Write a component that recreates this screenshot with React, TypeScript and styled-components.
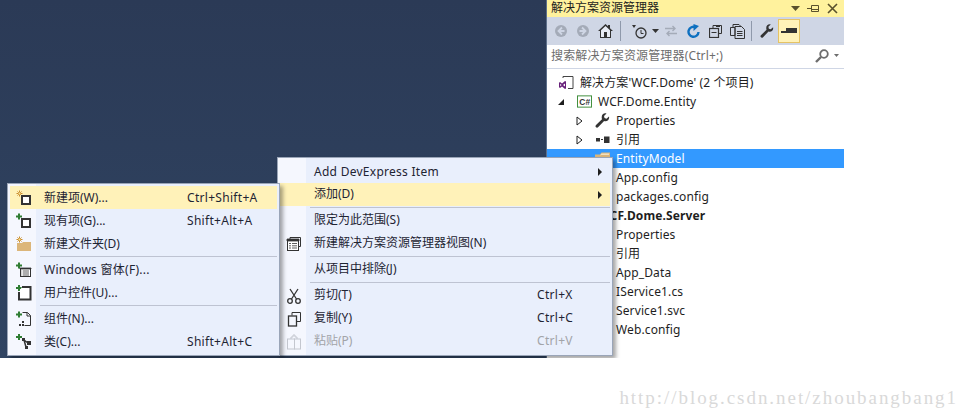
import React from "react";
import styled, { createGlobalStyle } from "styled-components";

// ---------------------------------------------------------------------------
// Types
// ---------------------------------------------------------------------------

type IconName =
  | "newItem" | "existingItem" | "newFolder" | "winForm" | "userControl"
  | "component" | "classItem" | "newView" | "cut" | "copy" | "paste";

type MenuEntry =
  | { sep: true }
  | {
      sep?: false;
      label: string;
      shortcut?: string;
      icon?: IconName;
      hot?: boolean;
      disabled?: boolean;
      arrow?: boolean;
    };

interface TreeEntry {
  depth: number;
  label: string;
  twist?: "open" | "closed";
  icon?: "solution" | "csharp" | "wrench" | "refs" | "folder";
  selected?: boolean;
  bold?: boolean;
}

// ---------------------------------------------------------------------------
// Data
// ---------------------------------------------------------------------------

const ADD_MENU: MenuEntry[] = [
  { label: "新建项(W)...", shortcut: "Ctrl+Shift+A", icon: "newItem", hot: true },
  { label: "现有项(G)...", shortcut: "Shift+Alt+A", icon: "existingItem" },
  { label: "新建文件夹(D)", icon: "newFolder" },
  { sep: true },
  { label: "Windows 窗体(F)...", icon: "winForm" },
  { label: "用户控件(U)...", icon: "userControl" },
  { sep: true },
  { label: "组件(N)...", icon: "component" },
  { label: "类(C)...", shortcut: "Shift+Alt+C", icon: "classItem" },
];

const PROJECT_MENU: MenuEntry[] = [
  { label: "Add DevExpress Item", arrow: true },
  { label: "添加(D)", arrow: true, hot: true },
  { sep: true },
  { label: "限定为此范围(S)" },
  { label: "新建解决方案资源管理器视图(N)", icon: "newView" },
  { sep: true },
  { label: "从项目中排除(J)" },
  { sep: true },
  { label: "剪切(T)", shortcut: "Ctrl+X", icon: "cut" },
  { label: "复制(Y)", shortcut: "Ctrl+C", icon: "copy" },
  { label: "粘贴(P)", shortcut: "Ctrl+V", icon: "paste", disabled: true },
];

const TREE: TreeEntry[] = [
  { depth: 0, label: "解决方案'WCF.Dome' (2 个项目)", icon: "solution" },
  { depth: 1, label: "WCF.Dome.Entity", twist: "open", icon: "csharp" },
  { depth: 2, label: "Properties", twist: "closed", icon: "wrench" },
  { depth: 2, label: "引用", twist: "closed", icon: "refs" },
  { depth: 2, label: "EntityModel", icon: "folder", selected: true },
  { depth: 2, label: "App.config" },
  { depth: 2, label: "packages.config" },
  { depth: 1, label: "WCF.Dome.Server", bold: true },
  { depth: 2, label: "Properties" },
  { depth: 2, label: "引用" },
  { depth: 2, label: "App_Data" },
  { depth: 2, label: "IService1.cs" },
  { depth: 2, label: "Service1.svc" },
  { depth: 2, label: "Web.config" },
];

// ---------------------------------------------------------------------------
// Styled
// ---------------------------------------------------------------------------

const Global = createGlobalStyle`
  html, body {
    margin: 0;
    background: #fff;
    overflow: hidden;
  }
  body {
    font-family: "Noto Sans", "Noto Sans CJK SC", sans-serif;
    font-size: 12px;
    line-height: 16px;
    color: #1e1e1e;
  }
`;

const Stage = styled.div`
  position: relative;
  display: flex;
  width: 844px;
  height: 358px;
  overflow: hidden;
`;

const Workspace = styled.div`
  width: 546px;
  flex-shrink: 0;
  background: linear-gradient(#2b3a56, #304462);
`;

const Panel = styled.div`
  width: 297px;
  flex-shrink: 0;
  display: flex;
  flex-direction: column;
  background: #fff;
  border-left: 1px solid #5d6f8a;
  border-right: 1px solid #9aa6bb;
`;

const TitleBar = styled.div`
  display: flex;
  align-items: center;
  height: 17px;
  padding: 0 6px 0 4px;
  background: #fff29d;
  color: #1c1c1c;
`;

const TitleText = styled.span`
  flex: 1;
  line-height: 12px;
  margin-top: -2px;
`;

const TitleButtons = styled.div`
  display: flex;
  align-items: center;
  gap: 7px;
`;

const Toolbar = styled.div`
  display: flex;
  align-items: center;
  height: 28px;
  padding-left: 3px;
  background: #cfd6e5;
`;

const ToolButton = styled.div<{ $active?: boolean; $width?: number }>`
  box-sizing: border-box;
  width: ${(p) => p.$width ?? 22}px;
  height: 24px;
  display: flex;
  align-items: center;
  justify-content: center;
  background: ${(p) => (p.$active ? "#fff2b9" : "transparent")};
  border: 1px solid ${(p) => (p.$active ? "#e5c365" : "transparent")};
`;

const ToolSep = styled.div<{ $left: number; $right: number }>`
  width: 1px;
  height: 20px;
  margin: 0 ${(p) => p.$right}px 0 ${(p) => p.$left}px;
  background: #8f99ab;
`;

const SearchBox = styled.div`
  display: flex;
  align-items: center;
  box-sizing: border-box;
  height: 24px;
  padding: 0 5px 2px 4px;
  background: #fff;
  border-bottom: 1px solid #cfd6e5;
  color: #6d6d6d;
`;

const SearchHint = styled.span`
  flex: 1;
  letter-spacing: 0.15px;
`;

const SearchCaret = styled.svg`
  margin-left: 5px;
`;

const Tree = styled.div`
  padding-top: 4px;
`;

const TreeRow = styled.div<{ $selected?: boolean; $bold?: boolean }>`
  display: flex;
  align-items: center;
  height: 19px;
  overflow: hidden;
  white-space: nowrap;
  letter-spacing: 0.12px;
  background: ${(p) => (p.$selected ? "#3399ff" : "transparent")};
  color: ${(p) => (p.$selected ? "#fff" : "#1e1e1e")};
  font-weight: ${(p) => (p.$bold ? 700 : 400)};
`;

const Twist = styled.span<{ $depth: number }>`
  flex-shrink: 0;
  width: 12px;
  margin-left: ${(p) => 18 * p.$depth - 10}px;
  display: flex;
  align-items: center;
  justify-content: center;
`;

const TreeIcon = styled.span`
  flex-shrink: 0;
  width: 15px;
  height: 15px;
  margin: 0 6px 0 10px;
  display: flex;
  align-items: center;
  justify-content: center;
`;

const Menu = styled.div<{ $left: number; $top: number; $width: number; $z: number }>`
  position: absolute;
  left: ${(p) => p.$left}px;
  top: ${(p) => p.$top}px;
  z-index: ${(p) => p.$z};
  box-sizing: border-box;
  width: ${(p) => p.$width}px;
  padding: 2px;
  background: linear-gradient(to right, #f5f7fe 28px, #e9effc 28px);
  border: 1px solid #9aa5b8;
  box-shadow: 3px 3px 4px rgba(0, 0, 0, 0.35);
  color: #1e2433;
`;

const MenuRow = styled.div<{ $hot?: boolean; $disabled?: boolean }>`
  display: flex;
  align-items: center;
  height: 23px;
  white-space: nowrap;
  background: ${(p) => (p.$hot ? "#fff2b9" : "transparent")};
  color: ${(p) => (p.$disabled ? "#a2a4a8" : "inherit")};
`;

const MenuIcon = styled.span`
  flex-shrink: 0;
  width: 27px;
  margin-right: 7px;
  display: flex;
  align-items: center;
  justify-content: center;
`;

const MenuLabel = styled.span<{ $width: number; $latin: boolean; $nudge: number }>`
  flex-shrink: 0;
  width: ${(p) => p.$width}px;
  margin-top: ${(p) => (p.$latin ? 0 : p.$nudge)}px;
  letter-spacing: ${(p) => (p.$latin ? "0.27px" : "0")};
`;

const MenuShortcut = styled.span<{ $nudge: number }>`
  margin-top: ${(p) => p.$nudge}px;
  letter-spacing: 0.3px;
`;

const MenuArrow = styled.span`
  margin-left: auto;
  margin-right: 8px;
  width: 0;
  height: 0;
  border-left: 4px solid #1e1e1e;
  border-top: 4px solid transparent;
  border-bottom: 4px solid transparent;
`;

const MenuSep = styled.div`
  height: 1px;
  margin: 1px 0 1px 30px;
  background: #bec3d2;
`;

const Watermark = styled.div`
  height: 60px;
  width: 958px;
  box-sizing: border-box;
  padding-top: 28px;
  text-align: right;
  font-family: "Liberation Serif", serif;
  font-size: 19px;
  line-height: 24px;
  letter-spacing: 1.95px;
  color: #d9d9d9;
`;

// ---------------------------------------------------------------------------
// Icons
// ---------------------------------------------------------------------------

const Star = ({ x = 3, y = 3 }: { x?: number; y?: number }) => (
  <g stroke="#c98a2b" strokeWidth="1">
    <path d={`M${x} ${y - 3}v6M${x - 3} ${y}h6M${x - 2} ${y - 2}l4 4M${x + 2} ${y - 2}l-4 4`} />
    <rect x={x - 1} y={y - 1} width="2" height="2" fill="#f6e39a" stroke="none" />
  </g>
);

const Plus = ({ x = 3, y = 3 }: { x?: number; y?: number }) => (
  <path d={`M${x} ${y - 3}v6M${x - 3} ${y}h6`} stroke="#2f7d32" strokeWidth="2" />
);

const MenuGlyph = ({ name }: { name: IconName }) => {
  switch (name) {
    case "newItem":
      return (
        <svg width="16" height="16" viewBox="0 0 16 16">
          <Star x={3.5} y={3.5} />
          <rect x="6" y="6" width="8" height="8" fill="#fff" stroke="#333" strokeWidth="2" />
        </svg>
      );
    case "existingItem":
      return (
        <svg width="16" height="16" viewBox="0 0 16 16">
          <Plus x={3} y={3.5} />
          <rect x="6" y="6" width="8" height="8" fill="#fff" stroke="#333" strokeWidth="2" />
        </svg>
      );
    case "newFolder":
      return (
        <svg width="16" height="16" viewBox="0 0 16 16">
          <path d="M1 7h5l1-1h8v9H1z" fill="#dcb67a" />
          <Star x={3.5} y={3.5} />
        </svg>
      );
    case "winForm":
      return (
        <svg width="16" height="16" viewBox="0 0 16 16">
          <Plus x={3} y={3.5} />
          <rect x="4.500" y="6.500" width="10" height="8" fill="#fff" stroke="#333" />
          <path d="M4 6h11v1H4zM7 9h6M7 11h6M7 13h6M5.500 9h.8M5.500 11h.8M5.500 13h.8" fill="#333" stroke="#333" strokeWidth=".8" />
        </svg>
      );
    case "userControl":
      return (
        <svg width="16" height="16" viewBox="0 0 16 16">
          <Plus x={3} y={3} />
          <path d="M6 2h8.500v12.500H3V7" fill="#fff" stroke="#333" strokeWidth="2" />
        </svg>
      );
    case "component":
      return (
        <svg width="16" height="16" viewBox="0 0 16 16">
          <Plus x={3} y={3.500} />
          <path d="M6.500 1.500h5l3 3v10h-6" fill="none" stroke="#333" />
          <path d="M11 1.500v3.500h3.500" fill="none" stroke="#333" />
          <path d="M6 10h2v2H6zM3 13h2v2H3zM6 13h2v2H6z" fill="#333" />
        </svg>
      );
    case "classItem":
      return (
        <svg width="16" height="16" viewBox="0 0 16 16">
          <Plus x={3} y={3} />
          <path d="M6 4h3v3H6zM11 7h4v4h-4zM9 12h3v3H9z" fill="#333" />
          <path d="M8 6l4 3M8 6l2 7" stroke="#333" strokeWidth="1.500" />
        </svg>
      );
    case "newView":
      return (
        <svg width="16" height="16" viewBox="0 0 16 16">
          <path d="M4 3V1.500h10.500v9H13" fill="none" stroke="#333" />
          <rect x="1.500" y="3.500" width="11" height="11" fill="#fff" stroke="#333" />
          <path d="M1 3h12v2H1zM3 7.500h2M6 7.500h5M3 9.800h2M6 9.800h5M3 12h2M6 12h5" fill="#333" stroke="#333" strokeWidth=".8" />
        </svg>
      );
    case "cut":
      return (
        <svg width="16" height="16" viewBox="0 0 16 16" fill="none" stroke="#333">
          <path d="M4 1l6.500 10M12 1L5.500 11" strokeWidth="1.300" />
          <circle cx="4" cy="13" r="2.300" strokeWidth="1.300" />
          <circle cx="12" cy="13" r="2.300" strokeWidth="1.300" />
        </svg>
      );
    case "copy":
      return (
        <svg width="16" height="16" viewBox="0 0 16 16" fill="none" stroke="#333">
          <path d="M6 4.500V1.500h8.500v9H10.500" />
          <rect x="2.500" y="5" width="8" height="10" strokeWidth="1.300" />
        </svg>
      );
    case "paste":
      return (
        <svg width="16" height="16" viewBox="0 0 16 16" fill="none" stroke="#c4c7cf">
          <path d="M5 5V3h2V1h2v2h2v2" />
          <rect x="1.500" y="5" width="7" height="10" />
          <rect x="8.500" y="5" width="6" height="10" />
        </svg>
      );
  }
};

const RoundArrow = ({ flip }: { flip?: boolean }) => (
  <svg width="14" height="14" viewBox="0 0 14 14" style={flip ? { transform: "scaleX(-1)" } : undefined}>
    <circle cx="7" cy="7" r="6" fill="#a4abb8" />
    <path d="M8 3.500L4.500 7 8 10.500M5 7h5.500" fill="none" stroke="#cfd6e5" strokeWidth="1.800" />
  </svg>
);

const TreeGlyph = ({ name }: { name: NonNullable<TreeEntry["icon"]> }) => {
  switch (name) {
    case "solution":
      return (
        <svg width="15" height="15" viewBox="0 0 15 15">
          <path d="M4 3V1.500h10v12H9" fill="none" stroke="#444" />
          <path d="M1 7l2 1.500L6 6l1 .5v7L6 14l-3-2.500L1 13l-1-.7V7.700zM1.200 8.800v2.500L2.600 10zM6 8.500L4 10l2 1.500z" fill="#68217a" />
        </svg>
      );
    case "csharp":
      return (
        <svg width="16" height="15" viewBox="0 0 16 15">
          <rect x=".5" y="1.500" width="15" height="12" fill="#fff" stroke="#388a34" />
          <text x="2.500" y="11" fontSize="9" fontWeight="700" fill="#333" fontFamily="Liberation Sans, sans-serif">C#</text>
        </svg>
      );
    case "wrench":
      return (
        <svg width="15" height="15" viewBox="0 0 15 15">
          <path d="M14 3.500l-2.500 2.200-2-.7-.5-2L11.500.500C9 -.300 6.500 1.500 6.700 4.500c0 .7.200 1.200.3 1.700L1 12c-.8 1-.6 1.800 0 2.300.6.500 1.500.6 2.300-.2l5.800-6c3 1 5.700-1.500 4.900-4.600z" fill="#333" />
        </svg>
      );
    case "refs":
      return (
        <svg width="15" height="15" viewBox="0 0 15 15">
          <path d="M1 6h4v3.500H1zM9 4.500h5.500v6.500H9z" fill="#333" />
          <path d="M6 7.500h2" stroke="#333" />
        </svg>
      );
    case "folder":
      return (
        <svg width="15" height="15" viewBox="0 0 15 15">
          <path d="M0 3.500h5l1.500-2H15V14H0z" fill="#dcb67a" />
          <path d="M5 4.500l1.500-2H14V4H6.500z" fill="#f1e0c0" />
        </svg>
      );
  }
};

const Tri = ({ open }: { open: boolean }) =>
  open ? (
    <svg width="8" height="8" viewBox="0 0 8 8">
      <path d="M7 1v6H1z" fill="#1e1e1e" />
    </svg>
  ) : (
    <svg width="7" height="10" viewBox="0 0 7 10">
      <path d="M1 1l5 4-5 4z" fill="#fff" stroke="#1e1e1e" />
    </svg>
  );

// ---------------------------------------------------------------------------
// Component
// ---------------------------------------------------------------------------

const ContextMenu = ({
  entries, left, top, width, labelWidth, z, nudge,
}: { entries: MenuEntry[]; left: number; top: number; width: number; labelWidth: number; z: number; nudge: number }) => (
  <Menu $left={left} $top={top} $width={width} $z={z}>
    {entries.map((entry, i) =>
      entry.sep ? (
        <MenuSep key={i} />
      ) : (
        <MenuRow key={i} $hot={entry.hot} $disabled={entry.disabled}>
          <MenuIcon>{entry.icon && <MenuGlyph name={entry.icon} />}</MenuIcon>
          <MenuLabel $width={labelWidth} $nudge={nudge} $latin={/[A-Za-z]{3}/.test(entry.label)}>{entry.label}</MenuLabel>
          {entry.shortcut && <MenuShortcut $nudge={nudge}>{entry.shortcut}</MenuShortcut>}
          {entry.arrow && <MenuArrow />}
        </MenuRow>
      )
    )}
  </Menu>
);

export default function App() {
  return (
    <>
      <Global />
      <Stage>
        <Workspace />
        <Panel>
          <TitleBar>
            <TitleText>解决方案资源管理器</TitleText>
            <TitleButtons>
              <svg width="9" height="5" viewBox="0 0 9 5"><path d="M0 0h9L4.500 5z" fill="#59502c" /></svg>
              <svg width="13" height="11" viewBox="0 0 13 11" fill="none" stroke="#59502c"><path d="M0 5.500h4M4.500 2.500v6h7v-6zM4.500 6.500h7" /></svg>
              <svg width="11" height="11" viewBox="0 0 11 11" fill="none" stroke="#59502c" strokeWidth="1.600"><path d="M1 1l9 9M10 1l-9 9" /></svg>
            </TitleButtons>
          </TitleBar>
          <Toolbar>
            <ToolButton><RoundArrow /></ToolButton>
            <ToolButton><RoundArrow flip /></ToolButton>
            <ToolButton>
              <svg width="15" height="14" viewBox="0 0 15 14">
                <path d="M7.500 0L0 7h2v7h11V7h2L12 4.200V1h-2v1.300z" fill="#333" />
                <path d="M7.500 2L3 6.300V13h3V8h3v5h3V6.300z" fill="#e8ecf4" />
              </svg>
            </ToolButton>
            <ToolSep $left={4} $right={7} />
            <ToolButton>
              <svg width="15" height="15" viewBox="0 0 15 15" fill="none" stroke="#333">
                <path d="M0 1h4L2 4z" fill="#333" stroke="none" />
                <circle cx="9" cy="9" r="5" strokeWidth="1.300" />
                <path d="M9 6v3.500h2.500" />
              </svg>
            </ToolButton>
            <ToolButton $width={10}>
              <svg width="7" height="4" viewBox="0 0 7 4"><path d="M0 0h7L3.500 4z" fill="#333" /></svg>
            </ToolButton>
            <ToolButton>
              <svg width="12" height="12" viewBox="0 0 12 12" fill="none" stroke="#a4abb8" strokeWidth="1.400">
                <path d="M0 3.500h10M7.500 1L10 3.500 7.500 6M12 8.500H2M4.500 6L2 8.500 4.500 11" />
              </svg>
            </ToolButton>
            <ToolButton>
              <svg width="13" height="14" viewBox="0 0 13 14" fill="none">
                <path d="M8.500 3.200A5 5 0 1 0 11.500 8" stroke="#0e70c0" strokeWidth="2.400" />
                <path d="M6.500 0v7L12 2z" fill="#0e70c0" />
              </svg>
            </ToolButton>
            <ToolButton>
              <svg width="13" height="13" viewBox="0 0 13 13" fill="none" stroke="#333">
                <path d="M4 3V.500h8.500v8H10M7 1.500h4" />
                <rect x=".5" y="3.500" width="9" height="9" strokeWidth="1.200" />
                <path d="M2.500 7.500h5" />
              </svg>
            </ToolButton>
            <ToolButton>
              <svg width="15" height="15" viewBox="0 0 15 15" fill="none" stroke="#333">
                <path d="M3 3V.500h6l2 2M.5 3.500H5v8H.5zM5 5V2.500h6.500l3 3v9H5z" />
                <path d="M7 7.500h5.500M7 9.500h5.500M7 11.500h5.500" />
              </svg>
            </ToolButton>
            <ToolSep $left={3} $right={4} />
            <ToolButton>
              <svg width="14" height="14" viewBox="0 0 15 15">
                <path d="M14 3.500l-2.500 2.200-2-.7-.5-2L11.500.500C9 -.300 6.500 1.500 6.700 4.500c0 .7.200 1.200.3 1.700L1 12c-.8 1-.6 1.800 0 2.300.6.500 1.500.6 2.300-.2l5.800-6c3 1 5.700-1.500 4.900-4.600z" fill="#333" />
              </svg>
            </ToolButton>
            <ToolButton $active>
              <svg width="16" height="6" viewBox="0 0 16 6"><path d="M0 3h5V0h11v5H0z" fill="#333" /></svg>
            </ToolButton>
          </Toolbar>
          <SearchBox>
            <SearchHint>搜索解决方案资源管理器(Ctrl+;)</SearchHint>
            <svg width="14" height="14" viewBox="0 0 14 14" fill="none" stroke="#6d6d6d">
              <circle cx="9" cy="5" r="3.800" strokeWidth="1.800" />
              <path d="M6 8l-5 5" strokeWidth="2.400" />
            </svg>
            <SearchCaret width="5" height="3" viewBox="0 0 7 4"><path d="M0 0h7L3.500 4z" fill="#6d6d6d" /></SearchCaret>
          </SearchBox>
          <Tree>
            {TREE.map((row) => (
              <TreeRow key={row.label + row.depth + (row.bold ? "b" : "") + (row.icon ?? "")} $selected={row.selected} $bold={row.bold}>
                <Twist $depth={row.depth}>{row.twist && <Tri open={row.twist === "open"} />}</Twist>
                <TreeIcon>{row.icon && <TreeGlyph name={row.icon} />}</TreeIcon>
                <span>{row.label}</span>
              </TreeRow>
            ))}
          </Tree>
        </Panel>
        <ContextMenu entries={PROJECT_MENU} left={277} top={157} width={336} labelWidth={223} z={1} nudge={-1} />
        <ContextMenu entries={ADD_MENU} left={7} top={183} width={273} labelWidth={143} z={2} nudge={0} />
      </Stage>
      <Watermark>http://blog.csdn.net/zhoubangbang1</Watermark>
    </>
  );
}
